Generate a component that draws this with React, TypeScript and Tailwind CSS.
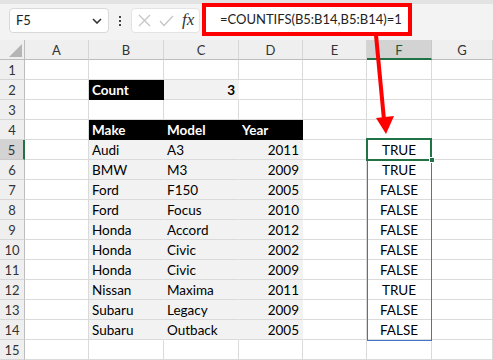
import React from "react";

const cols = ["A", "B", "C", "D", "E", "F", "G"];

const cars: [string, string, number, boolean][] = [
  ["Audi", "A3", 2011, true],
  ["BMW", "M3", 2009, true],
  ["Ford", "F150", 2005, false],
  ["Ford", "Focus", 2010, false],
  ["Honda", "Accord", 2012, false],
  ["Honda", "Civic", 2002, false],
  ["Honda", "Civic", 2009, false],
  ["Nissan", "Maxima", 2011, true],
  ["Subaru", "Legacy", 2009, false],
  ["Subaru", "Outback", 2005, false],
];

type Cell = { text?: string; cls: string };

function getCell(row: number, col: string): Cell {
  const base = "h-[20px] border-b border-r px-[3px] pt-px truncate";
  const plain = `${base} border-[#dadada]`;
  const black = `${base} bg-black text-white font-bold border-black`;
  const gray = `${base} bg-[#f2f2f2] border-b-[#dadada] border-r-[#f2f2f2]`;

  if (row === 2 && col === "B") return { text: "Count", cls: black };
  if (row === 2 && col === "C") return { text: "3", cls: `${gray} text-right font-bold` };
  if (row === 4 && col === "B") return { text: "Make", cls: black };
  if (row === 4 && col === "C") return { text: "Model", cls: black };
  if (row === 4 && col === "D") return { text: "Year", cls: black };

  if (row >= 5 && row <= 14) {
    const [make, model, year, unique] = cars[row - 5];
    if (col === "B") return { text: make, cls: gray };
    if (col === "C") return { text: model, cls: gray };
    if (col === "D") return { text: String(year), cls: `${gray} text-right` };
    if (col === "F") return { text: unique ? "TRUE" : "FALSE", cls: `${plain} text-center` };
  }
  return { cls: plain };
}

function FormulaBar() {
  return (
    <div className="h-[40px] bg-[#f3f3f3] border-t-[4px] border-[#e3e3e3] flex items-start pl-[9px]">
      <div className="mt-[4px] w-[100px] h-[25px] rounded-[4px] border border-[#d9d9d9] bg-white flex items-center justify-between pl-[6px] pr-[6px] text-[13px] text-[#222]">
        <span>F5</span>
        <svg width="10" height="6" viewBox="0 0 10 6">
          <path d="M1 1 L5 5 L9 1" fill="none" stroke="#333" strokeWidth="1.6" />
        </svg>
      </div>
      <div className="mt-[4px] w-[22px] h-[25px] flex flex-col items-center justify-center gap-[2px]">
        <span className="w-[2px] h-[2px] bg-[#444]" />
        <span className="w-[2px] h-[2px] bg-[#444]" />
        <span className="w-[2px] h-[2px] bg-[#444]" />
      </div>
      <div className="mt-[4px] w-[69px] h-[25px] rounded-[4px] border border-[#e3e3e3] bg-white flex items-center pl-[6px] gap-[8px]">
        <svg width="13" height="13" viewBox="0 0 13 13">
          <path d="M1 1 L12 12 M12 1 L1 12" stroke="#c4c4c4" strokeWidth="1.2" />
        </svg>
        <svg width="15" height="12" viewBox="0 0 15 12">
          <path d="M1 6 L5 10.5 L14 1" fill="none" stroke="#c4c4c4" strokeWidth="1.2" />
        </svg>
        <span className="font-['Liberation_Serif',serif] italic text-[17px] leading-none text-[#333] -mt-[2px]">fx</span>
      </div>
      <div className="ml-[2px] -mt-[1px] w-[210px] h-[33px] border-[4px] border-[#ff0000] bg-white flex items-center pl-[14px] text-[13px] text-[#222]">
        =COUNTIFS(B5:B14,B5:B14)=1
      </div>
    </div>
  );
}

export default function App() {
  const rows = Array.from({ length: 15 }, (_, i) => i + 1);
  return (
    <div className="relative w-[493px] h-[360px] overflow-hidden bg-white font-['Lato',sans-serif] text-[13.5px] text-black">
      <FormulaBar />
      <div className="relative grid grid-cols-[25px_64px_75px_75px_64px_64px_65px_61px] leading-[19px]">
        <div className="h-[20px] bg-[#efefef] border-b border-r border-[#bdbdbd] flex items-end justify-end pr-[2px] pb-[2px]">
          <svg width="13" height="13" viewBox="0 0 13 13">
            <path d="M0 13 L13 0 L13 13 Z" fill="#b5b5b5" />
          </svg>
        </div>
        {cols.map((c) =>
          c === "F" ? (
            <div key={c} className="h-[20px] pt-px text-[13px] bg-[#d3d3d3] border-r border-[#c8c8c8] border-b-2 border-b-[#217346] text-center text-[#1e5a38]">
              {c}
            </div>
          ) : (
            <div key={c} className="h-[20px] pt-px text-[13px] bg-[#efefef] border-r border-b border-r-[#d6d6d6] border-b-[#bdbdbd] text-center text-[#333]">
              {c}
            </div>
          )
        )}
        {rows.map((r) => (
          <React.Fragment key={r}>
            {r === 5 ? (
              <div className="h-[20px] pt-px text-[13px] bg-[#d3d3d3] border-b border-b-[#c8c8c8] border-r-2 border-r-[#217346] text-center text-[#333]">
                {r}
              </div>
            ) : (
              <div className="h-[20px] pt-px text-[13px] bg-[#efefef] border-b border-r border-b-[#d6d6d6] border-r-[#bdbdbd] text-center text-[#333]">
                {r}
              </div>
            )}
            {cols.map((c) => {
              const cell = getCell(r, c);
              return (
                <div key={c} className={cell.cls}>
                  {cell.text}
                </div>
              );
            })}
          </React.Fragment>
        ))}
        <div className="absolute left-[367px] top-[99px] w-[65px] h-[202px] border border-[#4472c4] pointer-events-none" />
        <div className="absolute left-[366px] top-[98px] w-[66px] h-[23px] border-2 border-[#217346] pointer-events-none" />
        <div className="absolute left-[429px] top-[117px] w-[6px] h-[6px] bg-[#217346] border border-white pointer-events-none" />
      </div>
      <svg className="absolute left-0 top-0 pointer-events-none" width="493" height="360" viewBox="0 0 493 360">
        <line x1="376" y1="35" x2="384" y2="120" stroke="#ff0000" strokeWidth="4" />
        <polygon points="376,118 394,116 386,134" fill="#ff0000" />
      </svg>
    </div>
  );
}
